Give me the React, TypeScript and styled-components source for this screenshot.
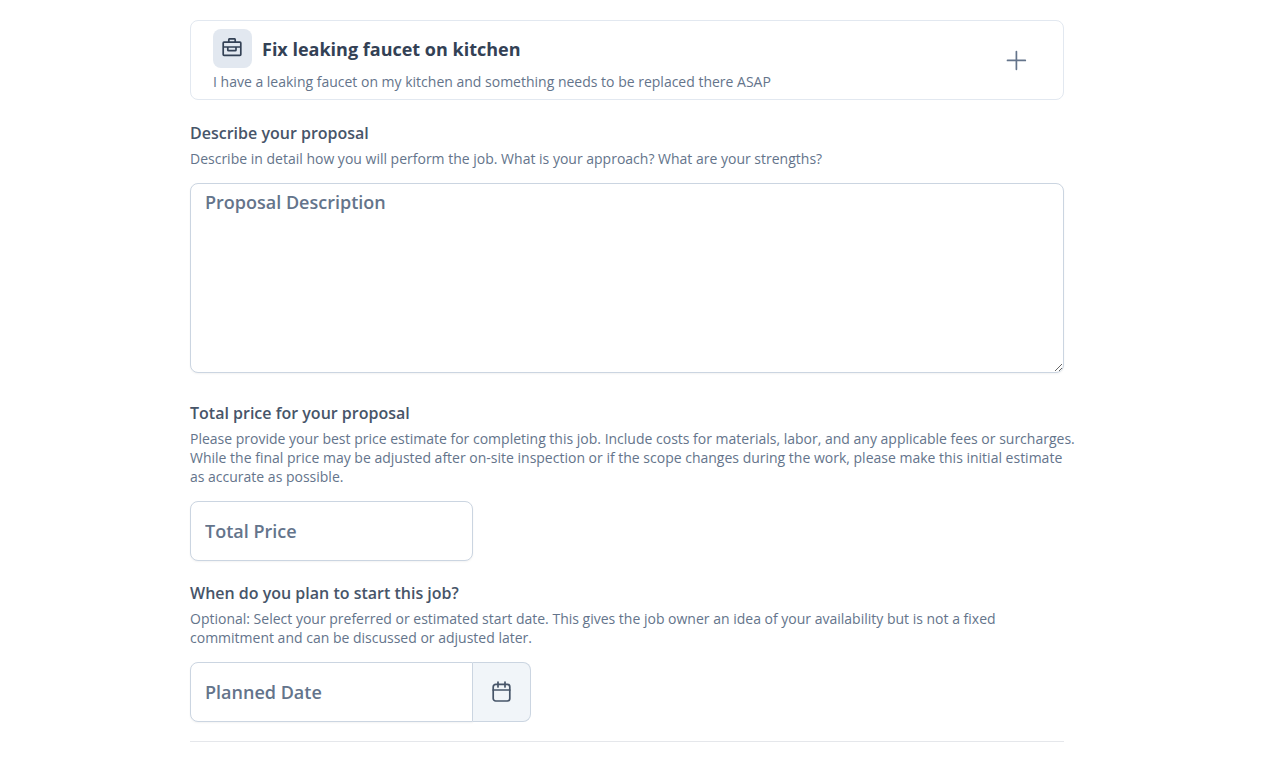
import React from "react";
import styled, { createGlobalStyle } from "styled-components";

const GlobalStyle = createGlobalStyle`
  *, *::before, *::after { box-sizing: border-box; }
  body {
    margin: 0;
    background: #ffffff;
    color: #475569;
    font-family: "Segoe UI", "Open Sans", "Noto Sans", sans-serif;
  }
  input, textarea, button { font: inherit; }
`;

const Page = styled.main`
  padding: 20px 32px 18px 16px;
`;

const Form = styled.form`
  max-width: 874px;
  margin: 0 auto;
`;

const JobCard = styled.section`
  display: flex;
  align-items: center;
  justify-content: space-between;
  padding: 8px 36px 8px 22px;
  margin-bottom: 22px;
  border: 1px solid #e2e8f0;
  border-radius: 8px;
`;

const JobHeader = styled.div`
  display: flex;
  align-items: center;
  gap: 10px;
`;

const IconTile = styled.span`
  display: flex;
  align-items: center;
  justify-content: center;
  width: 39px;
  height: 39px;
  border-radius: 8px;
  background: #e2e8f0;
  color: #334155;
`;

const JobTitle = styled.h1`
  margin: 0;
  font-size: 18px;
  line-height: 24px;
  font-weight: 700;
  color: #334155;
`;

const Hint = styled.p`
  margin: 0;
  font-size: 14px;
  line-height: 19px;
  color: #64748b;
`;

const JobSummary = styled(Hint)`
  margin-top: 4px;
`;

const ToggleButton = styled.button`
  display: flex;
  padding: 0;
  border: 0;
  background: none;
  color: #64748b;
  cursor: pointer;
`;

const Field = styled.section<{ $gap?: number }>`
  margin-bottom: ${(p) => p.$gap ?? 21}px;
`;

const FieldLabel = styled.label`
  display: block;
  margin-bottom: 5px;
  font-size: 16px;
  line-height: 22px;
  font-weight: 600;
  color: #475569;
`;

const FieldHint = styled(Hint)`
  margin-right: -16px;
  margin-bottom: 15px;
`;

const boxed = `
  border: 1px solid #cbd5e1;
  border-radius: 8px;
  background: #ffffff;
  box-shadow: 0 1px 2px rgba(18, 18, 23, 0.05);
  color: #475569;
  font-size: 18px;
  line-height: 24px;
  font-weight: 600;
  &::placeholder { color: #64748b; opacity: 1; }
  &:focus { outline: none; border-color: #64748b; }
`;

const TextArea = styled.textarea`
  ${boxed}
  display: block;
  width: 100%;
  height: 190px;
  padding: 6px 14px;
  resize: both;
`;

const TextInput = styled.input<{ $joined?: boolean }>`
  ${boxed}
  display: block;
  width: 283px;
  height: 60px;
  padding: 0 14px;
  ${(p) => p.$joined && "border-radius: 8px 0 0 8px;"}
`;

const InputGroup = styled.div`
  display: flex;
`;

const PickerButton = styled.button`
  display: flex;
  align-items: center;
  justify-content: center;
  width: 58px;
  padding: 0;
  border: 1px solid #cbd5e1;
  border-left: 0;
  border-radius: 0 8px 8px 0;
  background: #f1f5f9;
  color: #475569;
  cursor: pointer;
`;

const Divider = styled.hr`
  margin: 0;
  border: 0;
  border-top: 1px solid #e5e7eb;
`;

const BriefcaseIcon = () => (
  <svg width="21" height="21" viewBox="0 0 21 21" fill="none" stroke="currentColor" strokeWidth="1.7" strokeLinejoin="round" aria-hidden="true">
    <rect x="1.2" y="4.2" width="17.6" height="13.2" rx="0.8" />
    <path d="M6.8 4V1.8a1 1 0 0 1 1-1h4.4a1 1 0 0 1 1 1V4" />
    <path d="M1.2 9h17.6M5.8 9v2.900a0.800 0.800 0 0 0 0.800 0.800h6.600a0.800 0.800 0 0 0 0.800-0.800V9" />
  </svg>
);

const PlusIcon = () => (
  <svg width="21" height="21" viewBox="0 0 21 21" fill="none" stroke="currentColor" strokeWidth="1.7" strokeLinecap="round" aria-hidden="true">
    <path d="M10.4 1.5v17.8M1.5 10.4h17.8" />
  </svg>
);

const CalendarIcon = () => (
  <svg width="22" height="22" viewBox="0 0 22 22" fill="none" stroke="currentColor" strokeWidth="1.7" strokeLinecap="round" aria-hidden="true">
    <rect x="2.2" y="3.4" width="16.6" height="16.6" rx="2.5" />
    <path d="M2.2 9h16.6M7 1v5M14 1v5" />
  </svg>
);

export default function App() {
  return (
    <>
      <GlobalStyle />
      <Page>
        <Form onSubmit={(e) => e.preventDefault()}>
          <JobCard>
            <div>
              <JobHeader>
                <IconTile>
                  <BriefcaseIcon />
                </IconTile>
                <JobTitle>Fix leaking faucet on kitchen</JobTitle>
              </JobHeader>
              <JobSummary>
                I have a leaking faucet on my kitchen and something needs to be replaced there ASAP
              </JobSummary>
            </div>
            <ToggleButton type="button" aria-label="Expand job details">
              <PlusIcon />
            </ToggleButton>
          </JobCard>

          <Field $gap={29}>
            <FieldLabel htmlFor="description">Describe your proposal</FieldLabel>
            <FieldHint>
              Describe in detail how you will perform the job. What is your approach? What are your strengths?
            </FieldHint>
            <TextArea id="description" placeholder="Proposal Description" />
          </Field>

          <Field>
            <FieldLabel htmlFor="price">Total price for your proposal</FieldLabel>
            <FieldHint>
              Please provide your best price estimate for completing this job. Include costs for materials, labor, and any applicable fees or surcharges. While the final price may be adjusted after on-site inspection or if the scope changes during the work, please make this initial estimate as accurate as possible.
            </FieldHint>
            <TextInput id="price" type="text" inputMode="decimal" placeholder="Total Price" />
          </Field>

          <Field $gap={19}>
            <FieldLabel htmlFor="date">When do you plan to start this job?</FieldLabel>
            <FieldHint>
              Optional: Select your preferred or estimated start date. This gives the job owner an idea of your availability but is not a fixed commitment and can be discussed or adjusted later.
            </FieldHint>
            <InputGroup>
              <TextInput id="date" type="text" placeholder="Planned Date" $joined />
              <PickerButton type="button" aria-label="Choose date">
                <CalendarIcon />
              </PickerButton>
            </InputGroup>
          </Field>

          <Divider />
        </Form>
      </Page>
    </>
  );
}
